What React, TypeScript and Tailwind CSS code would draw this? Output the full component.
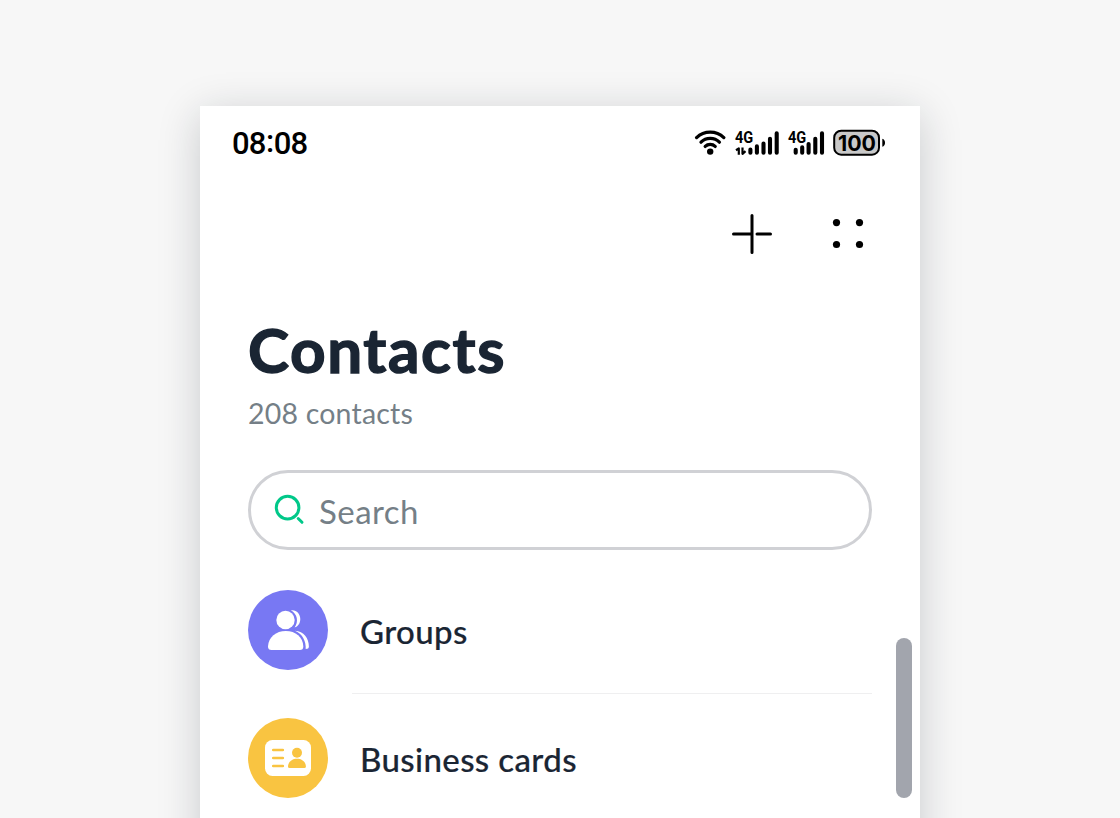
import React from "react";

function WifiIcon() {
  return (
    <svg className="block h-7 w-8" viewBox="694 129 32 28" fill="none" stroke="#000" strokeWidth="3.3" strokeLinecap="round">
      <path d="M696.6 137.6a19.5 19.5 0 0 1 27.2 0" />
      <path d="M701 142.2a13 13 0 0 1 18.4 0" />
      <path d="M705.2 146.4a7.2 7.2 0 0 1 10 0" />
      <circle cx="710.2" cy="151.6" r="3.2" fill="#000" stroke="none" />
    </svg>
  );
}

function SignalIcon({ data }: { data: boolean }) {
  return (
    <svg className="block h-7 w-[46px] overflow-visible" viewBox="0 0 46 28" stroke="#000" strokeWidth="4.1" strokeLinecap="round">
      <text x="0" y="14.2" fontFamily="Roboto" fontSize="17" fontWeight="700" stroke="none" fill="#000" textLength="18.3" lengthAdjust="spacingAndGlyphs">
        4G
      </text>
      {data && (
        <g fill="none" strokeWidth="2.2" strokeLinecap="butt" strokeLinejoin="round">
          <path d="M1 21.2l2.8-1.8v6.4" />
          <path d="M7.5 18.4v6.4l3-2.6" />
        </g>
      )}
      {data ? (
        <path d="M15.4 20.5v3.2M21.9 17.4v6.3M28.5 14.6v9.1M35 9.8v13.9M41.7 4.3v19.4" />
      ) : (
        <path d="M7.7 20.8v2.9M14.2 18.2v5.5M20.6 15v8.7M27.3 9.8v13.9M34 4.3v19.4" />
      )}
    </svg>
  );
}

function BatteryIcon() {
  return (
    <svg className="block h-7 w-[54px]" viewBox="833 129 54 28">
      <rect x="834.2" y="130.7" width="44.8" height="24" rx="7" fill="#c9c9c9" stroke="#000" strokeWidth="2" />
      <path d="M882.3 138.7q2.7.8 2.7 4t-2.7 4z" fill="#000" />
      <text x="838" y="150.8" fontFamily="Inter" fontSize="22" fontWeight="700" textLength="38" lengthAdjust="spacingAndGlyphs">
        100
      </text>
    </svg>
  );
}

function PlusIcon() {
  return (
    <svg className="block size-10" viewBox="0 0 40 40" stroke="#000" strokeWidth="3" strokeLinecap="round">
      <path d="M20 1.5v37M1.5 20H19" />
      <path d="M25 20h13.5" />
    </svg>
  );
}

function DotsIcon() {
  return (
    <svg className="block size-10" viewBox="0 0 40 40">
      <circle cx="8.5" cy="8.6" r="3.6" />
      <circle cx="31.5" cy="8.6" r="3.6" />
      <circle cx="8.5" cy="30.5" r="3.6" />
      <circle cx="31.5" cy="30.5" r="3.6" />
    </svg>
  );
}

function SearchIcon() {
  return (
    <svg className="block size-8" viewBox="0 0 32 32" fill="none" stroke="#00c889" strokeWidth="3" strokeLinecap="round">
      <circle cx="14.6" cy="13.6" r="11.3" />
      <path d="M25.2 24.5l3.8 3.8" />
    </svg>
  );
}

function GroupsIcon() {
  return (
    <svg className="block size-20" viewBox="0 0 80 80">
      <circle cx="40" cy="40" r="40" fill="#7878f3" />
      <g fill="#fff">
        <circle cx="37.5" cy="30" r="9.2" />
        <path d="M20 56.5C20.5 47 28 41 37.8 41S55 47 55.3 56.5Q55.3 60 51.8 60H23.5Q20 60 20 56.5z" />
        <path d="M42.8 20.3c5.2-1.1 9.5 3.3 9.5 8.7 0 4.5-2.4 7.7-5.7 8.4 4.2-5.4 2.9-13.6-3.8-17.1z" />
        <path d="M47 40.7c8.8.5 13.9 7.5 13.9 15.8q0 2.5-3.2 2.5c.4-7.3-2.7-15-10.7-18.3z" />
      </g>
    </svg>
  );
}

function CardIcon() {
  return (
    <svg className="block size-20" viewBox="0 0 80 80">
      <circle cx="40" cy="40" r="40" fill="#f9c441" />
      <rect x="17" y="22" width="46" height="36" rx="7.5" fill="#fff" />
      <g fill="#f9c441">
        <circle cx="49" cy="34.7" r="5" />
        <path d="M40 48.5c.2-4.6 4-7.7 9-7.7s8.7 3.1 8.9 7.7q0 1.5-1.5 1.5H41.5q-1.500 0-1.500-1.500z" />
      </g>
      <path d="M25.3 32h9.5M25.3 40h9.5M25.3 48h9.5" stroke="#f9c441" strokeWidth="2.7" strokeLinecap="round" />
    </svg>
  );
}

export default function App() {
  return (
    <div className="flex h-[818px] w-[1120px] justify-center overflow-hidden bg-[#f7f7f7] pt-[106px] font-['Lato',sans-serif]">
      <main className="flex h-[800px] w-[720px] shrink-0 flex-col bg-white shadow-[0_8px_40px_rgba(20,28,40,0.2)]">
        <header className="flex h-[74px] shrink-0 items-center pl-8 pr-[33px]">
          <time className="flex font-['Roboto',sans-serif] text-[31px] font-medium leading-none tracking-[-0.9px] text-black">
            <span>08</span>
            <span className="-mt-[2px] mb-[2px] px-[0.5px]">:</span>
            <span>08</span>
          </time>
          <div className="ml-auto flex items-center">
            <WifiIcon />
            <div className="ml-[9px] flex"><SignalIcon data /></div>
            <div className="ml-[7px] flex w-[45px]"><SignalIcon data={false} /></div>
            <BatteryIcon />
          </div>
        </header>
        <nav className="flex h-[108px] shrink-0 items-start justify-end gap-14 pr-[52px] pt-[34px]">
          <button aria-label="Add"><PlusIcon /></button>
          <button aria-label="More"><DotsIcon /></button>
        </nav>
        <section className="h-[182px] shrink-0 px-12 pt-6">
          <h1 className="text-[62px] font-bold leading-[75px] tracking-[1.6px] text-[#1a2533] [-webkit-text-stroke:1.4px_#1a2533]">Contacts</h1>
          <p className="mt-1.5 text-[28.5px] leading-10 tracking-[0.2px] text-[#757f87]">208 contacts</p>
        </section>
        <div className="mx-12 flex h-20 shrink-0 items-center rounded-full border-3 border-[#d0d1d5] pl-[22px] text-[33px] text-[#757f87]">
          <SearchIcon />
          <span className="ml-[14px] pt-0.5 leading-10 tracking-[0.45px]">Search</span>
        </div>
        <div className="flex h-[268px] shrink-0 justify-end pr-2">
          <ul className="w-[624px] pt-4 text-[33px] tracking-[0.38px] text-[#1a2533] [-webkit-text-stroke:0.2px_#1a2533]">
            <li className="flex h-32 items-center">
              <GroupsIcon />
              <div className="ml-6 flex h-full flex-1 items-center border-b border-[#efeff0] pl-2 pt-[5px] font-medium">Groups</div>
            </li>
            <li className="flex h-32 items-center">
              <CardIcon />
              <div className="pl-8 pt-1 font-medium">Business cards</div>
            </li>
          </ul>
          <div className="ml-6 mt-[88px] h-40 w-4 rounded-full bg-[#a2a5ad]" />
        </div>
      </main>
    </div>
  );
}
